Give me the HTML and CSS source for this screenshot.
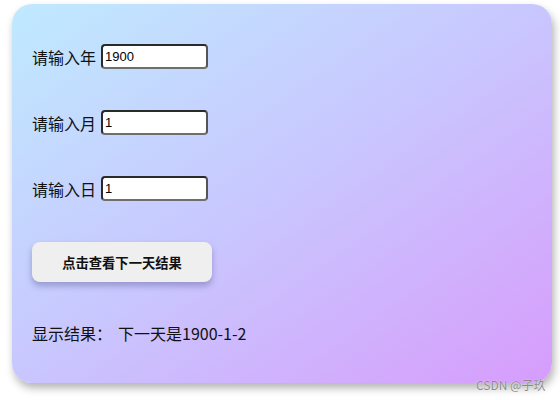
FILE: index.html
```html
<!DOCTYPE html>
<html lang="zh">
<head>
<meta charset="utf-8">
<link rel="stylesheet" href="styles.css">
</head>
<body>
<div class="card">
  <div class="row"><label class="label">请输入年</label><input class="field" type="text" value="1900"></div>
  <div class="row"><label class="label">请输入月</label><input class="field" type="text" value="1"></div>
  <div class="row"><label class="label">请输入日</label><input class="field" type="text" value="1"></div>
  <button class="btn">点击查看下一天结果</button>
  <div class="result"><span>显示结果：</span><span class="value">下一天是1900-1-2</span></div>
</div>
<div class="watermark">CSDN @子玖</div>
</body>
</html>
```
FILE: styles.css
```css
html, body {
  margin: 0;
  padding: 0;
  background: #ffffff;
}
body {
  width: 560px;
  height: 400px;
  position: relative;
  overflow: hidden;
  font-family: "Noto Sans CJK SC", "Noto Sans", sans-serif;
}
.card {
  box-sizing: border-box;
  margin: 4px 0 0 12px;
  width: 540px;
  height: 379px;
  border-radius: 20px;
  background: linear-gradient(to bottom right, #bfeaff 0%, #c9c6fe 50%, #d79cfc 100%);
  box-shadow: 2px 5px 8px rgba(0, 0, 0, 0.3);
  padding: 40px 20px 0 20px;
  display: flex;
  flex-direction: column;
  align-items: flex-start;
  gap: 41px;
}
.row {
  display: flex;
  align-items: center;
  height: 25px;
}
.label {
  font-size: 16px;
  line-height: 20px;
  color: #111;
  margin-right: 5px;
}
.field {
  box-sizing: border-box;
  width: 107px;
  height: 25px;
  border: 2px solid #2a2a2a;
  border-bottom-color: #6e6e6e;
  border-right-color: #555;
  border-radius: 4px;
  background: #fff;
  padding: 0 2px;
  font-family: "Liberation Sans", Arial, sans-serif;
  font-size: 13px;
  color: #000;
  outline: none;
}
.btn {
  box-sizing: border-box;
  width: 180px;
  height: 40px;
  border: none;
  border-radius: 8px;
  background: #efefef;
  box-shadow: 0 4px 6px rgba(60, 60, 120, 0.35);
  font-family: "Noto Sans CJK SC", sans-serif;
  font-size: 13.3px;
  font-weight: bold;
  color: #111;
  padding: 0;
}
.result {
  font-size: 16px;
  line-height: 22px;
  color: #111;
  margin-top: -1px;
}
.value {
  margin-left: 6px;
}
.watermark {
  position: absolute;
  left: 476px;
  top: 376px;
  font-family: "Noto Sans CJK SC", sans-serif;
  font-size: 12px;
  color: #8a8a8a;
  text-shadow: 0 0 1px #fff;
}
```
